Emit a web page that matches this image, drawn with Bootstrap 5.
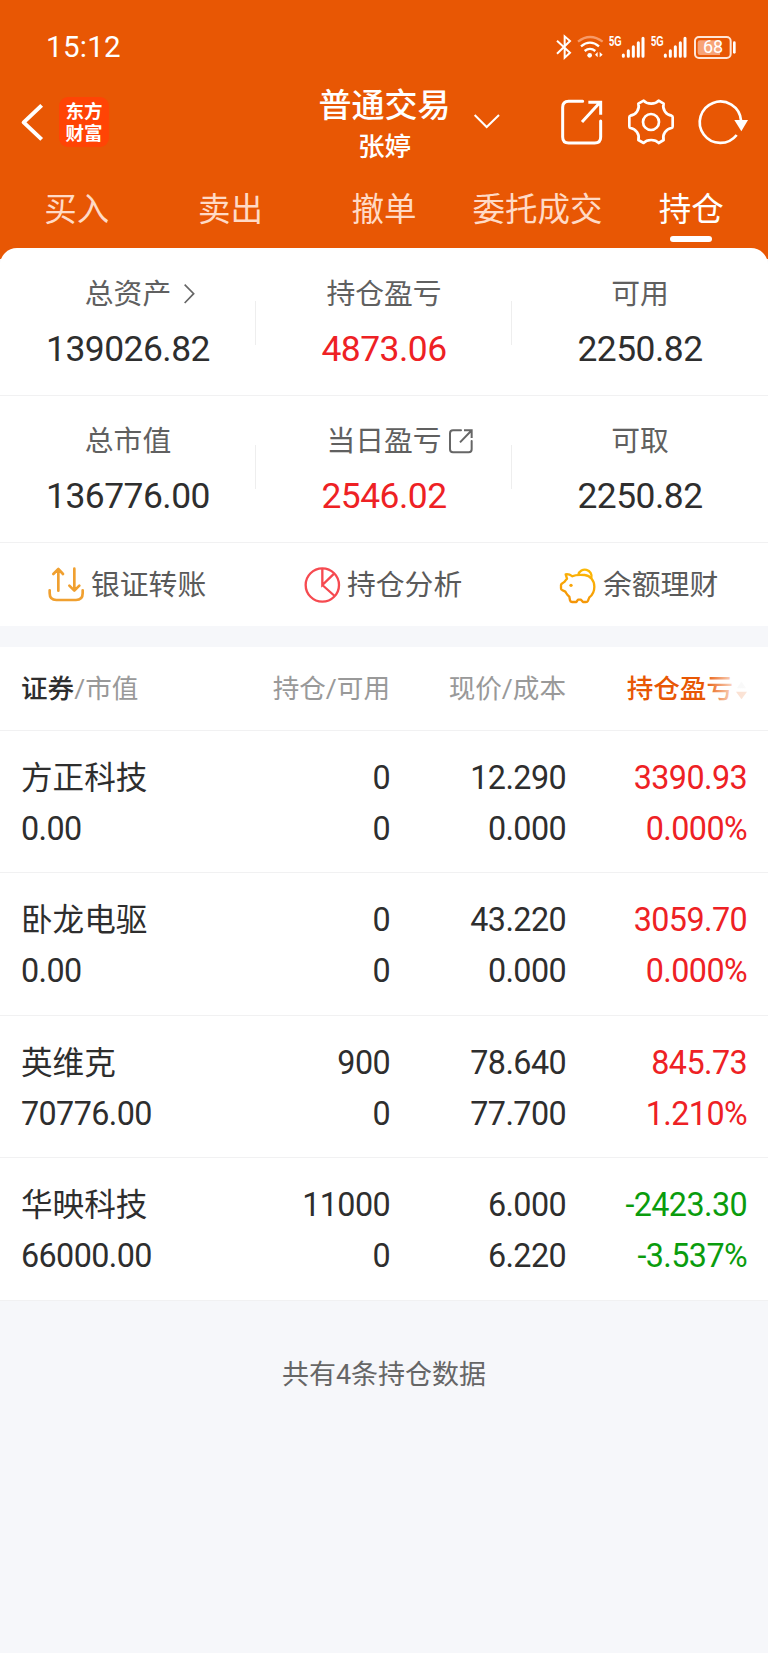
<!DOCTYPE html>
<html lang="zh-CN">
<head>
<meta charset="utf-8">
<meta name="viewport" content="width=device-width, initial-scale=1">
<title>持仓</title>
<link href="https://cdn.jsdelivr.net/npm/bootstrap@5.3.0/dist/css/bootstrap.min.css" rel="stylesheet">
<style>
body{font-family:Roboto,"Noto Sans CJK SC",sans-serif;background:#f6f7fa;color:#2e2e2e;min-height:1653px;overflow-x:hidden}
svg{display:block;flex:none;overflow:visible}
.app-head{background:#e85704;height:259px;color:#fff}
.status{height:72px;padding:22px 31px 0 46px}
.clock{font-size:29.5px;line-height:51px;letter-spacing:.3px}
.net{font:700 14px/12px "Liberation Sans",sans-serif;transform:scaleX(.68);transform-origin:0 0;width:12px}
.batt-num{font-size:18px;line-height:22px;left:0;width:38px;top:1px}
.title-bar{height:108px;padding:0 20px 0 21px}
.logo{width:50px;height:50px;border-radius:9px;background:#ff4405;margin-left:16px;padding-top:2px;font:700 18.5px/22px "Noto Sans CJK SC",sans-serif;text-align:center}
.side{width:264px}
.ttl{font-size:33px;line-height:40px;font-weight:500;height:40px}
.sub{font-size:26.6px;line-height:36px;height:36px;font-weight:500;margin-top:3px}
.caret{left:calc(100% + 23px);top:42px}
.tabs{height:68px}
.tab-i{font-size:32.5px;line-height:60px;height:68px;color:#ffdac6}
.tab-i.on{color:#fff}
.tab-i.on::after{content:"";position:absolute;left:50%;margin-left:-21px;bottom:6px;width:42px;height:6px;border-radius:3px;background:#fff}
.panel{margin-top:-11px;border-radius:17px 17px 0 0;background:#fff;position:relative}
.sum-row{height:148px;border-bottom:1px solid #f1f1f2}
.sum-row.second{height:147px}
.cell{padding-top:25px}
.second .cell{padding-top:24px}
.cell+.cell::before{content:"";position:absolute;left:-1px;top:53px;width:1px;height:44px;background:#eee}
.second .cell+.cell::before{top:49px}
.lab{font-size:28.8px;line-height:42px;height:42px;color:#606060}
.val{font-size:35.4px;letter-spacing:-.5px;line-height:44px;height:44px;margin-top:12px}
.up{color:#ee2124}.down{color:#0a9c0d}
.acts{height:83px}
.act{padding-left:48px;font-size:28.8px;color:#5a5a5a;line-height:80px}
.hold{margin-top:21px;background:#fff}
.hrow{display:grid;grid-template-columns:200px 169px 176px 181px;padding:0 21px 0 21px}
.hrow>*{text-align:right;white-space:nowrap}.hrow>:first-child{text-align:left}
.hh{height:84px;line-height:84px;font-size:26.6px;color:#999;border-bottom:1px solid #f1f1f2}
.fade-txt{color:#e85704;font-weight:500;position:relative}
.fade-txt::after{content:"";position:absolute;right:0;top:20px;width:42px;height:46px;background:linear-gradient(90deg,#fff0,#ffffffd0 70%,#ffffffd8)}
.pos{height:142.4px;border-bottom:1px solid #f1f1f2;font-size:32.3px;letter-spacing:-.6px;line-height:51px;padding-top:22px}
.pos div div{height:51px}
.pos>:first-child>:first-child{font-size:31.6px;letter-spacing:0}
.foot{font-size:27px;line-height:40px;color:#666;margin-top:54px}
</style>
</head>
<body>
<header class="app-head">
  <div class="status d-flex justify-content-between">
    <div class="clock">15:12</div>
    <div class="d-flex" style="padding-top:13px">
      <svg width="17" height="24" viewBox="513 104 51 72" fill="none" stroke="#fff" stroke-width="6"><path d="M516 121 555 157 539 172V108L555 122 516 160"/></svg>
      <svg class="ms-1" style="margin-right:5px" width="27" height="24" viewBox="579 104 81 72" fill="none" stroke="#fff" stroke-width="7"><path d="M582 124Q618 96 656 124" stroke="#f79a68"/><path d="M591 138Q618 116 645 138M602 152Q618 139 634 152"/><circle cx="617" cy="165" r="7" fill="#fff" stroke="none"/><path d="M641 155V171L633 163zM647 155V171L656 163z" fill="#fff" stroke="none"/></svg>
      <span class="net">5G</span>
      <svg style="margin-right:6px" width="24" height="24" viewBox="708 104 72 72" stroke="#fff" stroke-width="9" stroke-linecap="round"><path d="M715 164V168M730 151V168M745 139V168M760 127V168M774 114V168"/></svg>
      <span class="net">5G</span>
      <svg style="margin-right:7px" width="24" height="24" viewBox="708 104 72 72" stroke="#fff" stroke-width="9" stroke-linecap="round"><path d="M715 164V168M730 151V168M745 139V168M760 127V168M774 114V168"/></svg>
      <div class="position-relative">
        <svg width="43" height="24" viewBox="930 104 129 72" fill="none"><rect x="933" y="110" width="107" height="63" rx="12" stroke="#ffe6d8" stroke-width="6"/><path d="M948 120H1008V164H948Q941 164 941 157V127Q941 120 948 120Z" fill="#f7a377"/><path d="M1051 127V156" stroke="#fff" stroke-width="8" stroke-linecap="round"/></svg>
        <span class="batt-num position-absolute text-center">68</span>
      </div>
    </div>
  </div>
  <div class="title-bar d-flex justify-content-between">
    <div class="side d-flex align-items-start" style="padding-top:25px">
      <svg style="margin-top:7px" width="22" height="37" viewBox="63 310 66 111" fill="none" stroke="#fff" stroke-width="12"><path d="M125 314 71 365 125 416" stroke-linejoin="round"/></svg>
      <div class="logo">东方<br>财富</div>
    </div>
    <div class="position-relative text-center" style="padding-top:14px">
      <div class="ttl">普通交易</div><div class="sub">张婷</div>
      <svg class="caret position-absolute" width="26" height="15" viewBox="262 341 78 45" fill="none" stroke="#fff" stroke-width="6"><path d="M264 344 300 380 337 344"/></svg>
    </div>
    <div class="side d-flex justify-content-end" style="padding-top:27px">
      <svg style="margin-right:26px" width="41" height="46" viewBox="527 297 123 138" fill="none" stroke="#fff" stroke-width="9"><path d="M592 304H550Q532 304 532 322V411Q532 429 550 429H628Q646 429 646 411V363" stroke-linecap="round"/><path d="M590 366 643 308M609 307H646V344"/></svg>
      <svg style="margin-right:24px" width="46" height="46" viewBox="729 297 138 138" fill="none" stroke="#fff" stroke-width="8" stroke-linejoin="round"><path d="M776 302C786 314 811 314 821 302L836 311C831 327 843 345 860 347Q863 348 863 352V379Q863 383 860 384C843 386 831 404 836 420L821 429C811 417 786 417 776 429L760 420C765 404 753 386 736 384Q733 383 733 379V352Q733 348 736 347C753 345 765 327 760 311Z"/><circle cx="798" cy="366" r="24"/></svg>
      <svg width="50" height="46" viewBox="939 297 150 138" fill="none" stroke="#fff" stroke-width="8"><path d="M1055 405A62 62 0 1 1 1068 361"/><path d="M1048 360H1089L1069 394Z" fill="#fff" stroke="none"/></svg>
    </div>
  </div>
  <nav class="tabs d-flex text-center">
    <div class="tab-i col">买入</div><div class="tab-i col">卖出</div><div class="tab-i col">撤单</div><div class="tab-i col">委托成交</div><div class="tab-i on col position-relative">持仓</div>
  </nav>
</header>
<main>
  <section class="panel">
    <div class="sum-row d-flex text-center">
      <div class="cell col position-relative"><div class="lab"><span class="position-relative">总资产<svg class="position-absolute" style="left:calc(100% + 13px);top:7px" width="12" height="20" viewBox="554 70 36 60" fill="none" stroke="#666" stroke-width="5"><path d="M556 72 583 99 556 127"/></svg></span></div><div class="val">139026.82</div></div>
      <div class="cell col position-relative"><div class="lab">持仓盈亏</div><div class="val up">4873.06</div></div>
      <div class="cell col position-relative"><div class="lab">可用</div><div class="val">2250.82</div></div>
    </div>
    <div class="sum-row second d-flex text-center">
      <div class="cell col position-relative"><div class="lab">总市值</div><div class="val">136776.00</div></div>
      <div class="cell col position-relative"><div class="lab"><span class="position-relative">当日盈亏<svg class="position-absolute" style="left:calc(100% + 7px);top:5px" width="24" height="24" viewBox="194 503 72 72" fill="none" stroke="#666" stroke-width="6"><path d="M230 507H206Q197 507 197 516V564Q197 573 206 573H253Q262 573 262 564V539" stroke-linecap="round"/><path d="M227 543 260 509M239 507H262V530"/></svg></span></div><div class="val up">2546.02</div></div>
      <div class="cell col position-relative"><div class="lab">可取</div><div class="val">2250.82</div></div>
    </div>
    <div class="acts d-flex">
      <div class="act col d-flex align-items-center"><svg style="margin-right:6px" width="37" height="36" viewBox="145 108 111 108" fill="none" stroke="#f0a030" stroke-width="8" stroke-linecap="round" stroke-linejoin="round"><path d="M150 178V187Q150 207 170 207H229Q249 207 249 187V178M176 179V114M161 129 176 114 190 129M224 113V178M209 164 224 179 239 164"/></svg>银证转账</div>
      <div class="act col d-flex align-items-center"><svg style="margin-right:6px" width="37" height="36" viewBox="913 108 111 108" fill="none" stroke="#f64a50" stroke-width="7"><circle cx="968" cy="162" r="50"/><path d="M968 112V162L1004 127M968 162 1005 195"/></svg>持仓分析</div>
      <div class="act col d-flex align-items-center"><svg style="margin-right:6px" width="37" height="36" viewBox="529 108 111 108" fill="none" stroke="url(#pig)" stroke-width="7" stroke-linejoin="round"><defs><linearGradient id="pig" gradientUnits="userSpaceOnUse" x1="600" y1="108" x2="570" y2="216"><stop stop-color="#fcba06"/><stop offset="1" stop-color="#f49408"/></linearGradient></defs><path d="M546 130C556 128 562 133 566 136C575 131 590 131 603 132C620 134 632 148 632 167C632 183 625 193 617 199L613 209Q611 213 607 213H598L592 206H583L578 213H565Q560 213 559 208L557 197C550 192 548 187 545 182L535 177Q532 176 532 172V162Q532 159 536 157L543 152C546 147 549 145 550 143Z"/><path d="M584 131A20 20 0 1 1 623 141"/><circle cx="562" cy="163" r="5" fill="#f9a509" stroke="none"/></svg>余额理财</div>
    </div>
  </section>
  <section class="hold">
    <div class="hrow hh"><div><span style="color:#2e2e2e;font-weight:500">证券</span>/市值</div><div>持仓/可用</div><div>现价/成本</div><div class="fade-txt"><span style="margin-right:14px">持仓盈亏</span><svg class="position-absolute" style="right:0;top:32px" width="11" height="22" viewBox="0 0 13 22"><path d="M1 9 6.500 1 12 9z" fill="#ddd"/><path d="M0 13H13L6.500 22z" fill="#e85704"/></svg></div></div>
    <div class="hrow pos"><div><div>方正科技</div><div>0.00</div></div><div><div>0</div><div>0</div></div><div><div>12.290</div><div>0.000</div></div><div class="up"><div>3390.93</div><div>0.000%</div></div></div>
    <div class="hrow pos"><div><div>卧龙电驱</div><div>0.00</div></div><div><div>0</div><div>0</div></div><div><div>43.220</div><div>0.000</div></div><div class="up"><div>3059.70</div><div>0.000%</div></div></div>
    <div class="hrow pos"><div><div>英维克</div><div>70776.00</div></div><div><div>900</div><div>0</div></div><div><div>78.640</div><div>77.700</div></div><div class="up"><div>845.73</div><div>1.210%</div></div></div>
    <div class="hrow pos"><div><div>华映科技</div><div>66000.00</div></div><div><div>11000</div><div>0</div></div><div><div>6.000</div><div>6.220</div></div><div class="down"><div>-2423.30</div><div>-3.537%</div></div></div>
  </section>
  <div class="foot text-center">共有4条持仓数据</div>
</main>
<script src="https://cdn.jsdelivr.net/npm/bootstrap@5.3.0/dist/js/bootstrap.bundle.min.js"></script>
</body>
</html>
